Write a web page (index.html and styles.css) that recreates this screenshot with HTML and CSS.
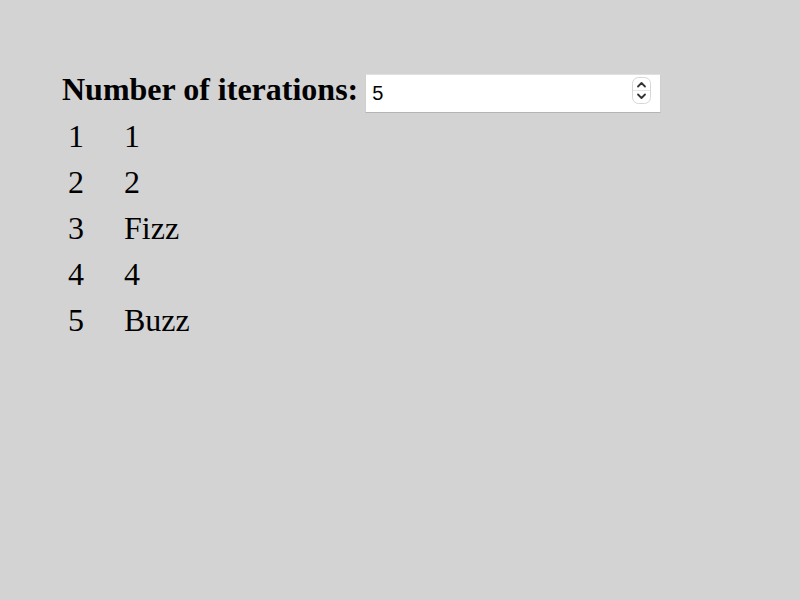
FILE: index.html
```html
<!DOCTYPE html>
<html>
<head>
<meta charset="utf-8">
<link rel="stylesheet" href="styles.css">
</head>
<body>
<div class="page">
  <div class="controls">
    <label class="label" for="iters">Number of iterations:</label>
    <div class="field">
      <input id="iters" class="input" type="text" value="5">
      <span class="spinner">
        <svg width="19" height="27" viewBox="0 0 19 27">
          <rect x="0.5" y="0.5" width="18" height="26" rx="6" fill="#fff" stroke="#d6d6d6"/>
          <line x1="1" y1="13.5" x2="18" y2="13.5" stroke="#e6e6e6"/>
          <path d="M6 9.5 L9.5 6 L13 9.5" fill="none" stroke="#333" stroke-width="1.8" stroke-linecap="round" stroke-linejoin="round"/>
          <path d="M6 17.5 L9.5 21 L13 17.5" fill="none" stroke="#333" stroke-width="1.8" stroke-linecap="round" stroke-linejoin="round"/>
        </svg>
      </span>
    </div>
  </div>
  <div class="list">
    <div class="row"><span class="n">1</span><span class="v">1</span></div>
    <div class="row"><span class="n">2</span><span class="v">2</span></div>
    <div class="row"><span class="n">3</span><span class="v">Fizz</span></div>
    <div class="row"><span class="n">4</span><span class="v">4</span></div>
    <div class="row"><span class="n">5</span><span class="v">Buzz</span></div>
  </div>
</div>
</body>
</html>
```

FILE: styles.css
```css
html, body {
  margin: 0;
  padding: 0;
  background: #d3d3d3;
}
body {
  font-family: "Liberation Serif", "Times New Roman", serif;
  font-size: 32px;
  color: #000;
}
.page {
  padding: 71px 0 0 62px;
}
.controls {
  display: flex;
  align-items: baseline;
  gap: 7px;
}
.label {
  font-weight: bold;
}
.field {
  position: relative;
}
.input {
  box-sizing: border-box;
  width: 296px;
  height: 39px;
  margin: 0;
  padding: 0 6px;
  border: 1px solid #cfcfcf;
  border-top-color: #e0e0e0;
  border-bottom-color: #b5b5b5;
  border-radius: 0;
  background: #fff;
  font-family: "Liberation Sans", Arial, sans-serif;
  font-size: 20px;
  color: #000;
  outline: none;
}
.spinner {
  position: absolute;
  right: 10px;
  top: 6px;
  width: 19px;
  height: 27px;
  line-height: 0;
}
.list {
  padding-left: 6px;
}
.row {
  display: flex;
  height: 46px;
  line-height: 46px;
}
.n {
  width: 56px;
}
```
